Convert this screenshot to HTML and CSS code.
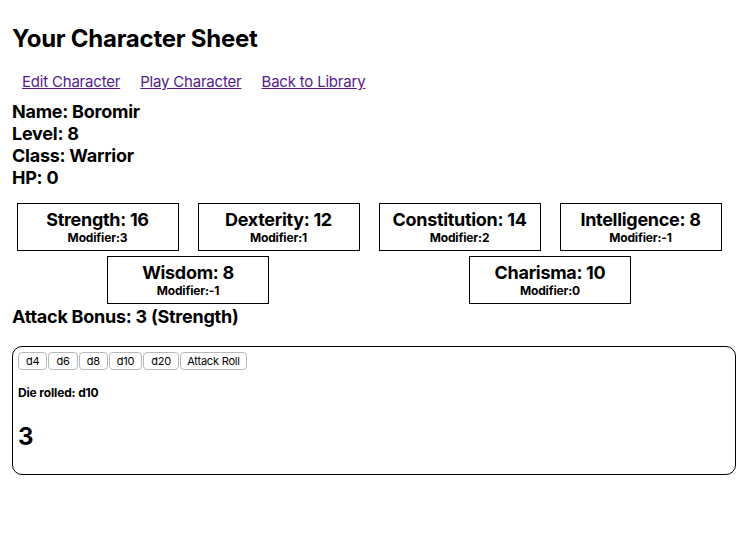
FILE: index.html
```html
<!DOCTYPE html>
<html>
<head>
<meta charset="utf-8">
<link rel="stylesheet" href="styles.css">
</head>
<body>
<h1 class="title">Your Character Sheet</h1>
<nav class="links">
  <a href="#">Edit Character</a>
  <a href="#">Play Character</a>
  <a href="#">Back to Library</a>
</nav>
<div class="info">
  <div>Name: Boromir</div>
  <div>Level: 8</div>
  <div>Class: Warrior</div>
  <div>HP: 0</div>
</div>
<div class="stats">
  <div class="stat"><div class="stat-name">Strength: 16</div><div class="stat-mod">Modifier:3</div></div>
  <div class="stat"><div class="stat-name">Dexterity: 12</div><div class="stat-mod">Modifier:1</div></div>
  <div class="stat"><div class="stat-name">Constitution: 14</div><div class="stat-mod">Modifier:2</div></div>
  <div class="stat"><div class="stat-name">Intelligence: 8</div><div class="stat-mod">Modifier:-1</div></div>
  <div class="stat"><div class="stat-name">Wisdom: 8</div><div class="stat-mod">Modifier:-1</div></div>
  <div class="stat"><div class="stat-name">Charisma: 10</div><div class="stat-mod">Modifier:0</div></div>
</div>
<div class="attack">Attack Bonus: 3 (Strength)</div>
<div class="dice">
  <div class="buttons">
    <button class="btn">d4</button><button class="btn">d6</button><button class="btn">d8</button><button class="btn">d10</button><button class="btn">d20</button><button class="btn">Attack Roll</button>
  </div>
  <div class="rolled">Die rolled: d10</div>
  <div class="result">3</div>
</div>
</body>
</html>
```
FILE: styles.css
```css
body {
  margin: 0;
  padding: 24px 12px 8px 12px;
  font-family: Inter, "Noto Sans", "Liberation Sans", sans-serif;
  color: #000;
  background: #fff;
}
.title {
  margin: 0;
  font-size: 24px;
  line-height: 30px;
  font-weight: 700;
  letter-spacing: -0.25px;
}
.links {
  display: flex;
  margin-top: 18px;
  line-height: 20px;
  font-size: 15px;
  letter-spacing: -0.2px;
}
.links a {
  color: #551a8b;
  text-decoration: underline;
  margin: 0 10px;
}
.info {
  margin-top: 9px;
  font-size: 18px;
  font-weight: 700;
  line-height: 22px;
  letter-spacing: -0.25px;
}
.stats {
  display: flex;
  flex-wrap: wrap;
  justify-content: space-around;
  row-gap: 5px;
  width: 724px;
  margin: 14px 0 0 -5px;
}
.stat {
  box-sizing: border-box;
  width: 162px;
  height: 48px;
  border: 1px solid #000;
  text-align: center;
  padding-top: 5px;
}
.stat-name {
  font-size: 18px;
  font-weight: 700;
  line-height: 22px;
  letter-spacing: -0.3px;
}
.stat-mod {
  font-size: 12px;
  font-weight: 700;
  line-height: 14px;
  letter-spacing: -0.15px;
}
.attack {
  margin-top: 2px;
  font-size: 18px;
  font-weight: 700;
  line-height: 22px;
  letter-spacing: -0.25px;
}
.dice {
  box-sizing: border-box;
  width: 724px;
  height: 129px;
  margin-top: 18px;
  border: 1px solid #000;
  border-radius: 10px;
  padding: 5px;
}
.buttons {
  display: flex;
  gap: 1px;
}
.btn {
  font-family: Inter, "Noto Sans", "Liberation Sans", sans-serif;
  font-size: 11px;
  line-height: 14px;
  padding: 1px 7px;
  background: #fff;
  border: 1px solid #b9b9b9;
  border-radius: 4px;
  color: #000;
  margin: 0;
  letter-spacing: -0.2px;
}
.btn:last-child {
  padding: 1px 6px;
}
.rolled {
  margin-top: 15px;
  font-size: 12px;
  font-weight: 700;
  line-height: 15px;
  letter-spacing: -0.15px;
}
.result {
  margin-top: 22px;
  font-size: 24px;
  font-weight: 700;
  line-height: 30px;
}
```
